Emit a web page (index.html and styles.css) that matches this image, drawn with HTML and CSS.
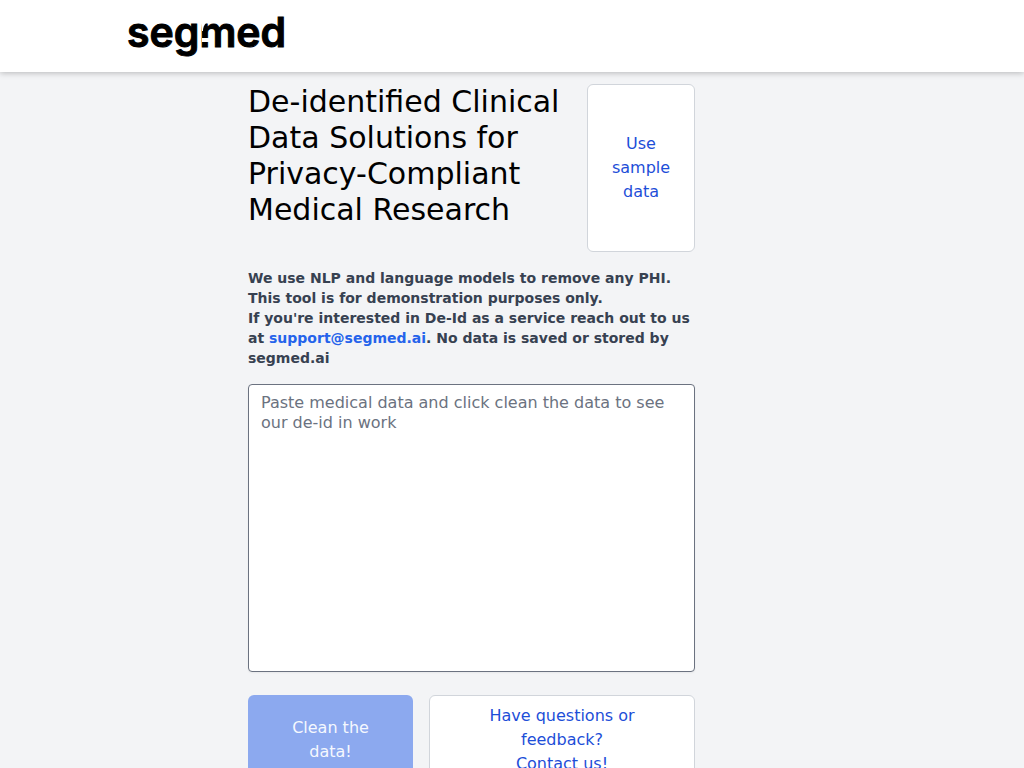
FILE: index.html
```
<!DOCTYPE html>
<html lang="en">
<head>
	<meta charset="UTF-8" />
	<meta name="viewport" content="width=device-width, initial-scale=1.0" />
	<title>Segmed De-Id</title>
	<link rel="stylesheet" href="styles.css">
</head>
<body>
<header class="topbar">
	<a class="logo" href="/">
		<svg width="160" height="40" viewBox="0 0 160 40" role="img" aria-label="segmed">
			<text class="logo-text" x="-1" y="31">segmed</text>
			<!-- cut and rounded shoulder on the first stem of the m -->
			<path d="M74 22h8v4h-8zM73 7h5q-3 3-3 8h-1z" fill="#fff" />
		</svg>
	</a>
</header>

<main class="content">
	<form class="tool">
		<div class="intro">
			<h1>De-identified Clinical Data Solutions for Privacy-Compliant Medical Research</h1>
			<button type="button" class="btn btn-sample">Use sample data</button>
		</div>
		<p class="note">
			We use NLP and language models to remove any PHI. This tool is for demonstration purposes only.<br>
			If you're interested in De-Id as a service reach out to us at <a href="mailto:support@segmed.ai">support@segmed.ai</a>. No data is saved or stored by segmed.ai
		</p>
		<textarea class="data" name="data" aria-label="Medical data" placeholder="Paste medical data and click clean the data to see our de-id in work"></textarea>
		<div class="actions">
			<button type="submit" class="btn btn-clean" disabled>Clean the data!</button>
			<a class="btn btn-contact" href="mailto:support@segmed.ai">Have questions or feedback?<br>Contact us!</a>
		</div>
	</form>
</main>
</body>
</html>
```
FILE: styles.css
```
* {
	box-sizing: border-box;
}
body {
	margin: 0;
	font-family: "DejaVu Sans", sans-serif;
	font-size: 16px;
	line-height: 24px;
	color: #000;
	background: #f3f4f6;
}
.topbar {
	padding: 16px 12.5%;
	background: #fff;
	box-shadow: 0 1px 6px rgba(0, 0, 0, 0.25);
}
.logo,
.logo svg {
	display: block;
}
.logo {
	width: 160px;
}
.logo svg {
	overflow: visible;
}
.logo-text {
	font-family: Inter, sans-serif;
	font-size: 41px;
	font-weight: 600;
	stroke: #000;
	stroke-width: 1px;
}
.content {
	display: grid;
	grid-template-columns: 120fr 447fr 201fr;
	padding: 12px 12.5% 24px;
}
.tool {
	grid-column: 2;
}
.intro {
	display: flex;
	justify-content: space-between;
	gap: 16px;
}
h1 {
	flex: 1;
	margin: 0 0 24px;
	font-size: 30px;
	line-height: 36px;
	font-weight: 400;
}
.btn {
	display: flex;
	align-items: center;
	justify-content: center;
	padding: 8px 24px;
	border: 1px solid #d1d5db;
	border-radius: 6px;
	background: #fff;
	color: #1d4ed8;
	font: inherit;
	text-align: center;
	text-decoration: none;
	cursor: pointer;
}
.btn-sample {
	width: 108px;
}
.note {
	margin: 16px 0;
	font-size: 14px;
	line-height: 20px;
	font-weight: 700;
	color: #374151;
}
.note a {
	color: #2563eb;
	text-decoration: none;
}
.data {
	display: block;
	width: 100%;
	height: 288px;
	padding: 8px 12px;
	border: 1px solid #6b7280;
	border-radius: 4px;
	background: #fff;
	box-shadow: 0 1px 2px rgba(0, 0, 0, 0.05);
	font: inherit;
	line-height: 20px;
	resize: none;
}
.data::placeholder {
	color: #6b7280;
	opacity: 1;
}
.actions {
	display: grid;
	grid-template-columns: 165fr 266fr;
	gap: 16px;
	margin-top: 23px;
}
.btn-clean {
	border-color: transparent;
	background: #8ca9ef;
	color: #f5f8fe;
	cursor: default;
}
```
